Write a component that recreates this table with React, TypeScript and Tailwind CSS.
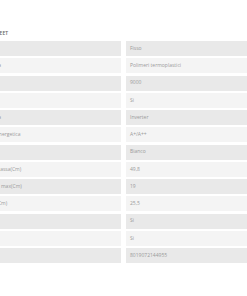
import * as React from "react";

const rows: [string, string][] = [
  ["Tipo", "Fisso"],
  ["Struttura", "Polimeri termoplastici"],
  ["BTU", "9000"],
  ["Wi-Fi", "Si"],
  ["Tipologia", "Inverter"],
  ["Classe energetica", "A+/A++"],
  ["Colore", "Bianco"],
  ["Altezza cassa(Cm)", "49,8"],
  ["Larghez. max(Cm)", "19"],
  ["Altezza(Cm)", "25,5"],
  ["Timer", "Si"],
  ["Gas", "Si"],
  ["EAN", "8019072144955"],
];

export default function App() {
  return (
    <div className="w-[247px] h-[296px] overflow-hidden bg-white font-['Open_Sans',sans-serif]">
      <div className="-ml-[24px] w-[295px] pt-[31px]">
        {/* Section title */}
        <div className="h-[10px] pl-[4px] text-[5px] font-semibold text-[#666] leading-[5px]">
          DATASHEET
        </div>
        <div className="flex flex-col gap-[2.25px]">
          {rows.map(([label, value], i) => (
            <div key={label} className="flex gap-[5px]">
              <div
                className={`w-[145px] h-[15px] flex items-center px-[4px] text-[5px] text-[#9a9a9a] ${
                  i % 2 === 0 ? "bg-[#e9e9e9]" : "bg-[#f4f4f4]"
                }`}
              >
                {label}
              </div>
              <div
                className={`w-[145px] h-[15px] flex items-center px-[4px] text-[5px] text-[#9a9a9a] ${
                  i % 2 === 0 ? "bg-[#e9e9e9]" : "bg-[#f4f4f4]"
                }`}
              >
                {value}
              </div>
            </div>
          ))}
        </div>
      </div>
    </div>
  );
}
